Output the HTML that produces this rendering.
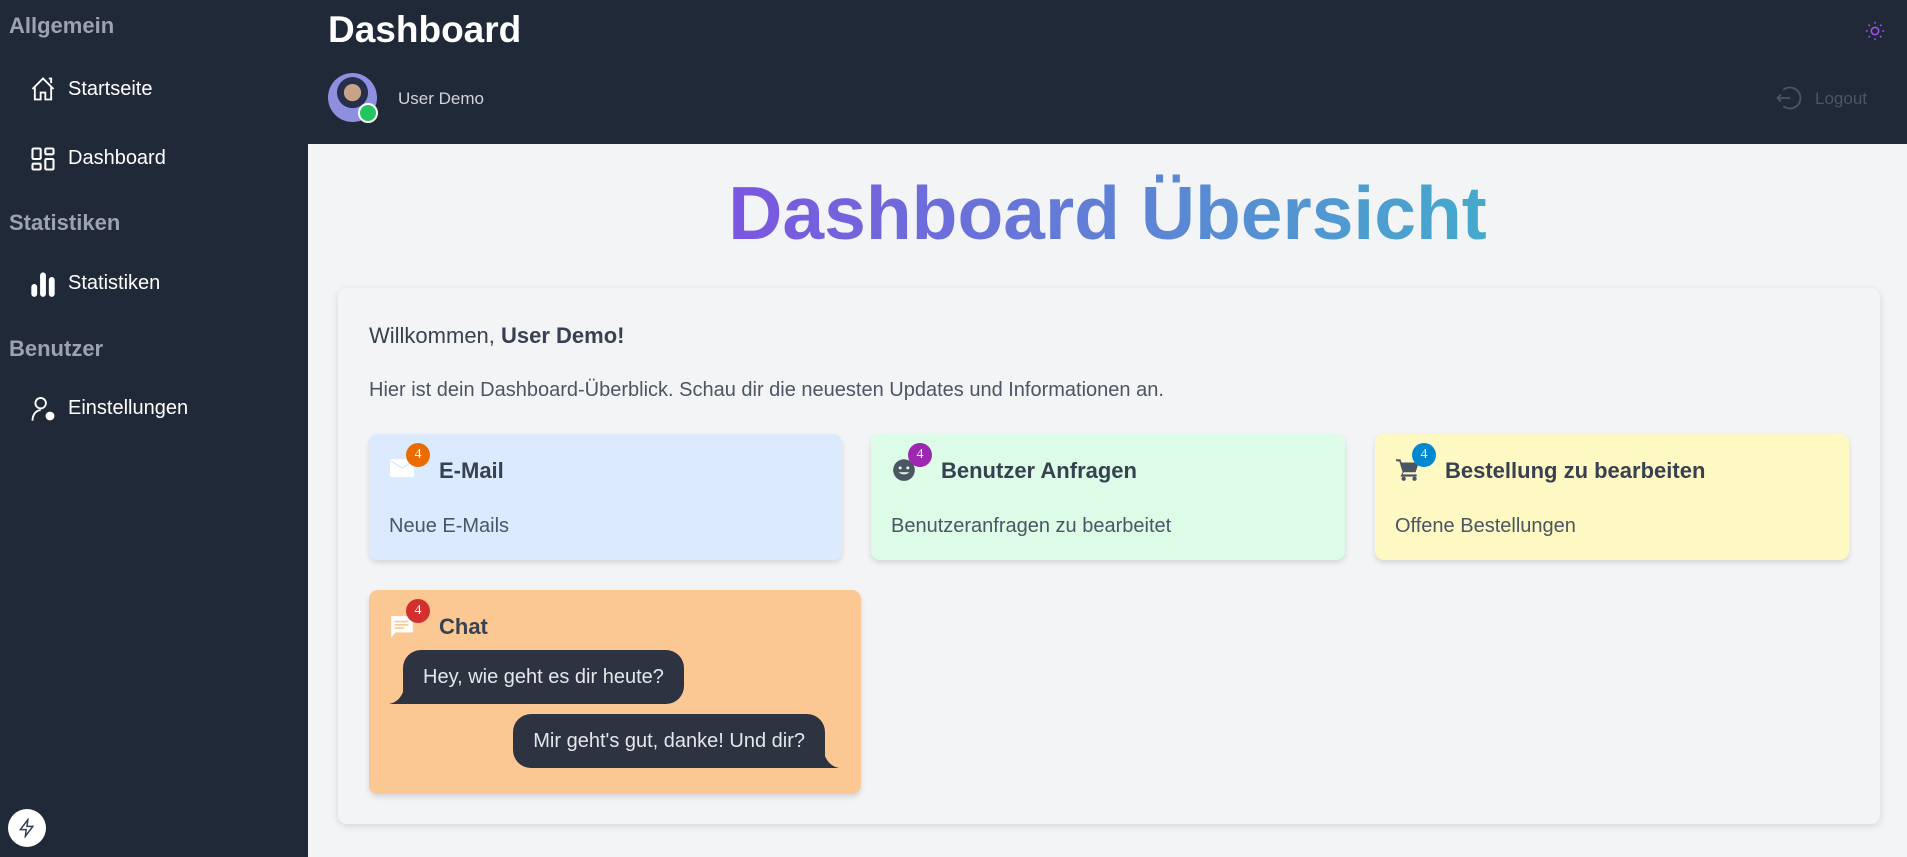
<!DOCTYPE html>
<html><head><meta charset="utf-8"><style>
*{box-sizing:border-box;margin:0;padding:0}
body{width:1907px;height:857px;overflow:hidden;font-family:"Liberation Sans",Arial,sans-serif;background:#f3f4f6;position:relative}
.sb{position:absolute;left:0;top:0;width:308px;height:857px;background:#1f2937}
.sh{position:absolute;left:9px;color:#9ca3af;font-weight:bold;font-size:22px}
.si{position:absolute;left:68px;color:#fff;font-size:20px}
.ic{position:absolute;left:29px}
.hd{position:absolute;left:308px;top:0;right:0;height:144px;background:#1f2937}
.abs{position:absolute}
.card{position:absolute;border-radius:9px;box-shadow:0 3px 6px rgba(0,0,0,.12)}
.ct{position:absolute;left:70px;top:24px;font-weight:bold;font-size:22px;color:#374151}
.cs{position:absolute;left:20px;top:81px;font-size:20px;color:#4b5563}
.badge{position:absolute;left:37px;top:9px;width:24px;height:24px;border-radius:50%;color:#fff;font-size:14px;text-align:center;line-height:24px;font-family:"Liberation Serif",serif}
.bub{position:absolute;background:#2d3340;color:#e5e7eb;font-size:20px;line-height:54px;padding:0 20px;border-radius:18px;white-space:nowrap}
</style></head><body>
<div class="sb">
 <div class="sh" style="top:13px">Allgemein</div>
 <svg class="ic" style="top:75px" width="28" height="28" viewBox="0 0 24 24" fill="none" stroke="#fff" stroke-width="1.6"><path d="M3 12L12 3l9 9M5 10v11h5v-6h4v6h5V10M17 3h2v4"/></svg>
 <div class="si" style="top:78px">Startseite</div>
 <svg class="ic" style="top:145px" width="28" height="28" viewBox="0 0 24 24" fill="none" stroke="#fff" stroke-width="1.8"><rect x="3" y="3" width="7" height="9" rx="1"/><rect x="14" y="3" width="7" height="5" rx="1"/><rect x="14" y="12" width="7" height="9" rx="1"/><rect x="3" y="16" width="7" height="5" rx="1"/></svg>
 <div class="si" style="top:147px">Dashboard</div>
 <div class="sh" style="top:210px">Statistiken</div>
 <svg class="ic" style="top:270px" width="28" height="28" viewBox="0 0 24 24" fill="#fff"><rect x="2" y="12" width="5" height="11" rx="2.5"/><rect x="9.5" y="2" width="5" height="21" rx="2.5"/><rect x="17" y="6" width="5" height="17" rx="2.5"/></svg>
 <div class="si" style="top:272px">Statistiken</div>
 <div class="sh" style="top:336px">Benutzer</div>
 <svg class="ic" style="top:395px" width="28" height="28" viewBox="0 0 24 24" fill="none" stroke="#fff" stroke-width="1.6"><circle cx="10" cy="7" r="4.5"/><path d="M3 22c0-5 3-9 7-9"/><circle cx="18" cy="18" r="3" fill="#fff"/></svg>
 <div class="si" style="top:397px">Einstellungen</div>
 <div class="abs" style="left:8px;top:809px;width:38px;height:38px;border-radius:50%;background:#fff"><svg style="margin:9px" width="20" height="20" viewBox="0 0 24 24" fill="none" stroke="#374151" stroke-width="1.8"><path d="M13 2L4 14h7l-1 8 9-12h-7z"/></svg></div>
</div>
<div class="hd">
 <div class="abs" style="left:20px;top:9px;color:#fff;font-weight:bold;font-size:37px">Dashboard</div>
 <div class="abs" style="left:20px;top:73px;width:49px;height:49px;border-radius:50%;background:radial-gradient(circle at 50% 40%,#c7a38a 0 22%,#27304a 23% 40%,#8f8fe0 41%)"></div>
 <div class="abs" style="left:50px;top:103px;width:20px;height:20px;border-radius:50%;background:#22c55e;border:2px solid #fff"></div>
 <div class="abs" style="left:90px;top:89px;color:#d1d5db;font-size:17px">User Demo</div>
 <svg class="abs" style="left:1556px;top:20px" width="22" height="22" viewBox="0 0 24 24" fill="none" stroke="#a855f7" stroke-width="1.6"><circle cx="12" cy="12" r="4"/><path d="M12 2v2M12 20v2M2 12h2M20 12h2M5 5l1.5 1.5M17.5 17.5L19 19M5 19l1.5-1.5M17.5 6.5L19 5"/></svg>
 <svg class="abs" style="left:1466px;top:84px" width="28" height="28" viewBox="0 0 24 24" fill="none" stroke="#4b5563" stroke-width="1.6"><path d="M8 5a9 9 0 1 1 0 14"/><path d="M14 12H3M6 9l-3 3 3 3"/></svg>
 <div class="abs" style="left:1507px;top:89px;color:#4b5563;font-size:17px">Logout</div>
</div>
<div class="abs" style="left:308px;right:0;top:170px;text-align:center;font-weight:bold;font-size:75px;"><span style="background:linear-gradient(90deg,#7c56e0,#44aacd);-webkit-background-clip:text;background-clip:text;color:transparent">Dashboard Übersicht</span></div>
<div class="abs" style="left:338px;top:288px;width:1542px;height:536px;background:#f3f4f6;border-radius:9px;box-shadow:0 2px 8px rgba(0,0,0,.13)"></div>
<div class="abs" style="left:369px;top:323px;font-size:22px;color:#374151">Willkommen, <b>User Demo!</b></div>
<div class="abs" style="left:369px;top:379px;font-size:20px;color:#4b5563">Hier ist dein Dashboard-Überblick. Schau dir die neuesten Updates und Informationen an.</div>

<div class="card" style="left:369px;top:434px;width:473px;height:126px;background:#dbeafe">
 <svg class="abs" style="left:20px;top:22px" width="26" height="24" viewBox="0 0 26 24"><rect x="1" y="3" width="24" height="18" rx="2" fill="#fff"/><path d="M2 5l11 7 11-7" fill="none" stroke="#dbeafe" stroke-width="1.5"/></svg>
 <div class="badge" style="background:#ea6c00">4</div>
 <div class="ct">E-Mail</div><div class="cs">Neue E-Mails</div>
</div>
<div class="card" style="left:871px;top:434px;width:474px;height:126px;background:#dcfce7">
 <svg class="abs" style="left:20px;top:22px" width="26" height="26" viewBox="0 0 24 24"><circle cx="12" cy="13" r="10" fill="#4b5563"/><circle cx="8.5" cy="11" r="1.4" fill="#dcfce7"/><circle cx="15.5" cy="11" r="1.4" fill="#dcfce7"/><path d="M7 15q5 4 10 0" fill="#dcfce7"/></svg>
 <div class="badge" style="background:#9c27b0">4</div>
 <div class="ct">Benutzer Anfragen</div><div class="cs">Benutzeranfragen zu bearbeitet</div>
</div>
<div class="card" style="left:1375px;top:434px;width:474px;height:126px;background:#fef9c3">
 <svg class="abs" style="left:20px;top:22px" width="26" height="26" viewBox="0 0 24 24" fill="#4b5563"><path d="M1 3h4l1 3h16l-3 9H8l-1 2h13v2H5l2-4L4 5H1z"/><circle cx="8" cy="21" r="2"/><circle cx="18" cy="21" r="2"/></svg>
 <div class="badge" style="background:#0288d1">4</div>
 <div class="ct">Bestellung zu bearbeiten</div><div class="cs">Offene Bestellungen</div>
</div>
<div class="card" style="left:369px;top:590px;width:492px;height:204px;background:#fbc893">
 <svg class="abs" style="left:20px;top:24px" width="26" height="26" viewBox="0 0 24 24"><path d="M2 2h20v15H6l-4 5z" fill="#fff"/><path d="M5 7h13M5 10h13M5 13h9" stroke="#fbc893" stroke-width="1.5"/></svg>
 <div class="badge" style="background:#d32f2f">4</div>
 <div class="ct">Chat</div>
 <div class="bub" style="left:34px;top:60px;border-bottom-left-radius:0">Hey, wie geht es dir heute?<svg class="abs" style="left:-14px;bottom:0" width="16" height="12" viewBox="0 0 16 12"><path d="M14 0v12H0q10-2 14-12z" fill="#2d3340"/></svg></div>
 <div class="bub" style="right:36px;top:124px;border-bottom-right-radius:0">Mir geht's gut, danke! Und dir?<svg class="abs" style="right:-14px;bottom:0" width="16" height="12" viewBox="0 0 16 12"><path d="M2 0v12h14Q6 10 2 0z" fill="#2d3340"/></svg></div>
</div>
</body></html>
